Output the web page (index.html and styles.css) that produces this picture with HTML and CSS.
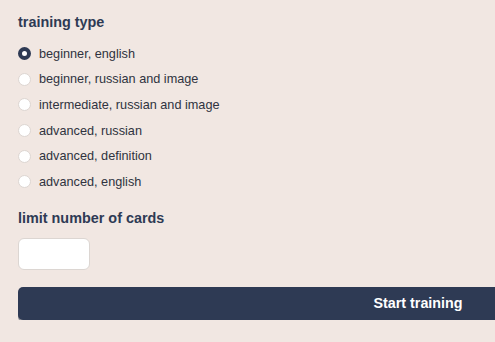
FILE: index.html
```html
<!DOCTYPE html>
<html lang="en">
<head>
  <meta charset="UTF-8">
  <meta name="viewport" content="width=device-width, initial-scale=1.0">
  <title>Training</title>
  <link rel="stylesheet" href="styles.css">
</head>
<body>
  <form class="training-form">
    <h2>training type</h2>
    <div class="radio-list">
      <label class="radio-row"><input type="radio" name="type" checked><span>beginner, english</span></label>
      <label class="radio-row"><input type="radio" name="type"><span>beginner, russian and image</span></label>
      <label class="radio-row"><input type="radio" name="type"><span>intermediate, russian and image</span></label>
      <label class="radio-row"><input type="radio" name="type"><span>advanced, russian</span></label>
      <label class="radio-row"><input type="radio" name="type"><span>advanced, definition</span></label>
      <label class="radio-row"><input type="radio" name="type"><span>advanced, english</span></label>
    </div>

    <h2>limit number of cards</h2>
    <input type="text" class="limit-input">

    <button type="submit" class="btn">Start training</button>
  </form>
</body>
</html>
```

FILE: styles.css
```css
body {
  font-family: "Liberation Sans", Arial, sans-serif;
  margin: 0;
  padding: 0 18px;
  background-color: #f1e7e2;
  color: #2f3340;
  overflow: hidden;
}

.training-form {
  padding-top: 14px;
}

h2 {
  color: #2e3a54;
  font-size: 14.4px;
  font-weight: 700;
  margin: 0 0 11px 0;
}

.radio-list {
  display: flex;
  flex-direction: column;
  margin-bottom: 15px;
}

.radio-row {
  display: flex;
  align-items: center;
  gap: 8px;
  height: 25.6px;
  font-size: 12.7px;
}

.radio-row input {
  appearance: none;
  margin: 0;
  width: 13px;
  height: 13px;
  border-radius: 50%;
  background: #fff;
  border: 1px solid #ddd6d2;
  box-sizing: border-box;
}

.radio-row input:checked {
  background: #fff;
  border: 4.5px solid #2e3a54;
}

.limit-input {
  display: block;
  width: 72px;
  height: 32px;
  box-sizing: border-box;
  border: 1px solid #dcd6d2;
  border-radius: 6px;
  background: #fff;
  margin-top: 12px;
}

.btn {
  display: block;
  width: 800px;
  height: 33px;
  margin-top: 17px;
  background: #2e3a54;
  color: #fff;
  border: none;
  border-radius: 5px;
  box-shadow: 0 2px 0 #8f9097;
  font-family: "Liberation Sans", Arial, sans-serif;
  font-size: 14.3px;
  font-weight: 700;
  text-align: center;
  cursor: pointer;
}
```
